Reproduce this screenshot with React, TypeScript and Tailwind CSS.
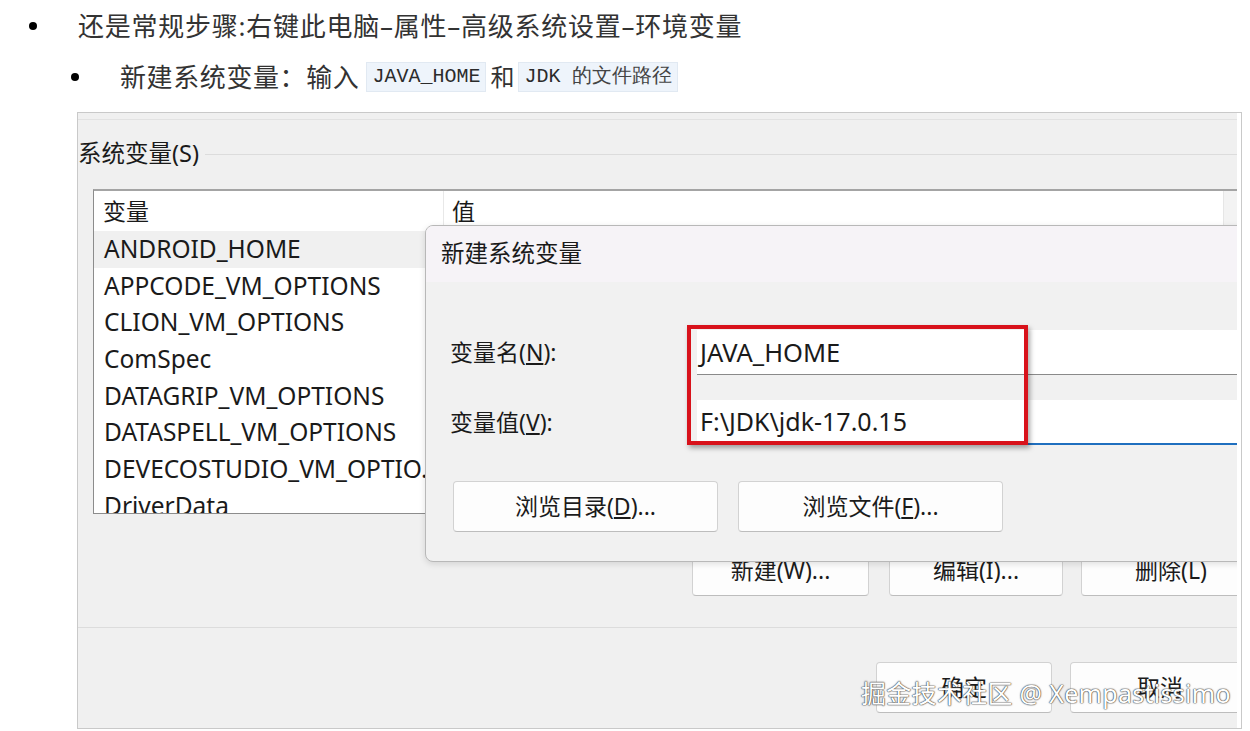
import React from 'react';

const rows = [
  'ANDROID_HOME',
  'APPCODE_VM_OPTIONS',
  'CLION_VM_OPTIONS',
  'ComSpec',
  'DATAGRIP_VM_OPTIONS',
  'DATASPELL_VM_OPTIONS',
  'DEVECOSTUDIO_VM_OPTIO...',
  'DriverData',
];

function WinButton({ children, className }: { children: React.ReactNode; className: string }) {
  return (
    <div
      className={`shrink-0 flex items-center justify-center rounded-[4px] border border-[#d2d2d2] border-b-[#bdbdbd] bg-[#fdfdfd] text-[23px] text-[#1b1b1b] ${className}`}
    >
      {children}
    </div>
  );
}

export default function App() {
  return (
    <div className="relative w-[1250px] h-[731px] overflow-hidden bg-white font-['Noto_Sans','Noto_Sans_CJK_SC',sans-serif]">
      {/* ── Article text ── */}
      <div className="pt-[8px] text-[#333]">
        <div className="flex items-center h-[36px]">
          <span className="ml-[29px] w-[8px] h-[8px] rounded-full bg-black shrink-0" />
          <span className="ml-[41px] text-[26px] leading-none whitespace-nowrap tracking-[0.75px]">
            还是常规步骤:右键此电脑–属性–高级系统设置–环境变量
          </span>
        </div>
        <div className="flex items-center h-[36px] mt-[15px]">
          <span className="ml-[71px] w-[8px] h-[8px] rounded-full bg-black shrink-0" />
          <span className="ml-[41px] text-[26px] leading-none whitespace-nowrap tracking-[0.6px]">新建系统变量：输入</span>
          <code className="ml-[7px] h-[30px] flex items-center px-[5px] bg-[#eef4fb] border border-[#e1e9f2] text-[20px] text-[#2b2b2b] font-['Liberation_Mono',monospace]">
            JAVA_HOME
          </code>
          <span className="mx-[4px] text-[24px] leading-none">和</span>
          <code className="h-[30px] flex items-center px-[5px] bg-[#eef4fb] border border-[#e1e9f2] text-[20px] text-[#2b2b2b] whitespace-pre">
            <span className="font-['Liberation_Mono',monospace]">JDK </span>
            <span className="text-[#444]">的文件路径</span>
          </code>
        </div>
      </div>

      {/* ── Screenshot of the Windows dialog ── */}
      <div className="ml-[77px] mt-[17px] w-[1165px] h-[617px] border border-[#c9c9c9] bg-white flex">
        <div className="relative w-[1159px] h-full bg-[#f0f0f0] overflow-hidden flex flex-col text-[#1a1a1a]">
          <div className="h-[7px] shrink-0 border-b border-[#e2e2e2]" />

          <div className="h-[68px] shrink-0 flex items-center">
            <span className="text-[23.5px] whitespace-nowrap">系统变量(S)</span>
            <div className="flex-1 h-px bg-[#dcdcdc] ml-[6px]" />
          </div>

          {/* list view */}
          <div className="ml-[15px] mt-[1px] h-[325px] shrink-0 bg-white border border-[#8c8c8c] border-t-2 border-t-[#a4a4a4] border-r-0 overflow-hidden">
            <div className="flex h-[40px]">
              <div className="w-[350px] pl-[9px] flex items-center border-r border-[#e8e8e8] text-[23px]">变量</div>
              <div className="flex-1 pl-[8px] flex items-center text-[23px]">值</div>
              <div className="w-[14px] bg-[#f3f3f3] border-l border-[#e6e6e6]" />
            </div>
            {rows.map((r, i) => (
              <div
                key={r}
                className={`h-[36.7px] flex items-center pl-[10px] text-[24.5px] whitespace-nowrap ${i === 0 ? 'bg-[#f0f0f0]' : ''}`}
              >
                {r}
              </div>
            ))}
          </div>

          <div className="mt-[31px] pl-[614px] flex gap-[20px] h-[51px] shrink-0">
            <WinButton className="w-[177px] h-[51px]">新建(W)...</WinButton>
            <WinButton className="w-[174px] h-[51px]">编辑(I)...</WinButton>
            <WinButton className="w-[180px] h-[51px] -ml-[2px]">删除(L)</WinButton>
          </div>

          <div className="mt-[31px] h-px shrink-0 bg-[#dcdcdc]" />

          <div className="mt-[34px] pl-[798px] flex gap-[18px] h-[51px] shrink-0">
            <WinButton className="w-[176px] h-[51px]">确定</WinButton>
            <WinButton className="w-[180px] h-[51px]">取消</WinButton>
          </div>

          {/* 新建系统变量 dialog on top */}
          <div className="absolute left-[347px] top-[112px] w-[900px] h-[337px] rounded-[8px] border border-[#b8b8b8] bg-[#f1f1f1] shadow-[0_2px_6px_rgba(0,0,0,0.12)] overflow-hidden">
            <div className="relative">
              <div className="h-[56px] bg-[#f6f3f7] flex items-center pl-[15px] text-[23.5px]">新建系统变量</div>

              <div className="mt-[48px] flex h-[45px]">
                <div className="w-[271px] pl-[24px] flex items-center text-[23px]">
                  变量名(<span className="underline underline-offset-2">N</span>):
                </div>
                <div className="flex-1 bg-white border-b border-[#8a8a8a] pl-[3px] flex items-center text-[25.5px]">
                  JAVA_HOME
                </div>
              </div>

              <div className="mt-[25px] flex h-[45px]">
                <div className="w-[271px] pl-[24px] flex items-center text-[23px]">
                  变量值(<span className="underline underline-offset-2">V</span>):
                </div>
                <div className="flex-1 bg-white border-b-2 border-[#1f6fbf] pl-[3px] flex items-center text-[25px]">
                  F:\JDK\jdk-17.0.15
                </div>
              </div>

              <div className="mt-[36px] pl-[27px] flex gap-[20px]">
                <WinButton className="w-[265px] h-[51px]">
                  浏览目录(<span className="underline underline-offset-2">D</span>)...
                </WinButton>
                <WinButton className="w-[265px] h-[51px]">
                  浏览文件(<span className="underline underline-offset-2">F</span>)...
                </WinButton>
              </div>

              {/* red highlight box */}
              <div className="absolute left-[261px] top-[99px] w-[341px] h-[120px] border-4 border-[#d8121b] shadow-[2px_3px_5px_rgba(0,0,0,0.35)]" />
            </div>
          </div>
        </div>
        <div className="flex-1 bg-white" />
      </div>

      {/* watermark */}
      <div className="absolute left-[861px] top-[676px] text-[25px] leading-[34px] whitespace-nowrap text-white tracking-[0.3px] [text-shadow:0_0_1px_#3a3a3a,0_0_1px_#3a3a3a,0_0_2px_#777]">
        掘金技术社区 @ Xempastissimo
      </div>
    </div>
  );
}
